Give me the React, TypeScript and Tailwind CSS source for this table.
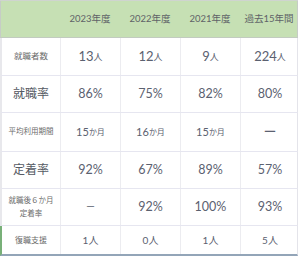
const jp = "font-['Lato','Noto_Sans_CJK_JP',sans-serif]";

const headers = ["2023年度", "2022年度", "2021年度", "過去15年間"];

type Cell = { num: string; unit?: string; cls?: string };

const rows: {
  label: React.ReactNode;
  labelClass: string;
  h: string;
  valueClass: string;
  unitClass?: string;
  cells: Cell[];
  leftAccent?: boolean;
}[] = [
  {
    label: "就職者数",
    labelClass: "text-[8.5px] text-[#6b6b6b]",
    h: "h-[38px]",
    valueClass: "text-[13px]",
    unitClass: "text-[9px]",
    cells: [
      { num: "13", unit: "人" },
      { num: "12", unit: "人" },
      { num: "9", unit: "人" },
      { num: "224", unit: "人" },
    ],
  },
  {
    label: "就職率",
    labelClass: "text-[12px] text-[#555a63]",
    h: "h-[37px]",
    valueClass: "text-[12.5px]",
    cells: [{ num: "86%" }, { num: "75%" }, { num: "82%" }, { num: "80%" }],
  },
  {
    label: "平均利用期間",
    labelClass: "text-[7.5px] text-[#6b6b6b]",
    h: "h-[39px]",
    valueClass: "text-[11px]",
    unitClass: "text-[8px]",
    cells: [
      { num: "15", unit: "か月" },
      { num: "16", unit: "か月" },
      { num: "15", unit: "か月" },
      { num: "ー", cls: "text-[13px]" },
    ],
  },
  {
    label: "定着率",
    labelClass: "text-[12px] text-[#555a63]",
    h: "h-[37px]",
    valueClass: "text-[12.5px]",
    cells: [{ num: "92%" }, { num: "67%" }, { num: "89%" }, { num: "57%" }],
  },
  {
    label: (
      <>
        就職後６か月
        <br />
        定着率
      </>
    ),
    labelClass: "text-[7.5px] leading-[13px] text-[#6b6b6b]",
    h: "h-[37px]",
    valueClass: "text-[12.5px]",
    cells: [{ num: "ー", cls: "text-[9px]" }, { num: "92%" }, { num: "100%" }, { num: "93%" }],
  },
  {
    label: "復職支援",
    labelClass: "text-[8px] text-[#6b6b6b]",
    h: "h-[30px]",
    valueClass: "text-[10px]",
    unitClass: "text-[10px]",
    leftAccent: true,
    cells: [
      { num: "1", unit: "人" },
      { num: "0", unit: "人" },
      { num: "1", unit: "人" },
      { num: "5", unit: "人" },
    ],
  },
];

const cols = "grid grid-cols-[59px_60px_60px_60px_58px]";

export default function App() {
  return (
    <div className={`w-[300px] h-[260px] bg-white ${jp}`}>
      <div className="w-[298px] border-t border-[#cfd4cf]">
        {/* header */}
        <div className={`${cols} h-[37px] bg-[#c6e0b4] border-b border-[#c2cbc0] border-x border-x-[#c6ccc6]`}>
          <div />
          {headers.map((h) => (
            <div key={h} className="flex items-center justify-center text-[9.5px] text-[#5f6368]">
              {h}
            </div>
          ))}
        </div>

        {/* body */}
        {rows.map((r, i) => (
          <div
            key={i}
            className={`${cols} ${r.h} border-r border-[#e4e4ea] border-l-2 ${
              r.leftAccent ? "border-l-[#78b078]" : "border-l-[#e8e8ec]"
            } ${i < rows.length - 1 ? "border-b border-b-[#e6e6f0]" : "border-b-2 border-b-[#93a5b8]"}`}
          >
            <div className={`flex items-center justify-center text-center border-r border-[#ececf0] ${r.labelClass}`}>
              <span>{r.label}</span>
            </div>
            {r.cells.map((c, j) => (
              <div
                key={j}
                className={`flex items-center justify-center text-[#5b6170] ${j < 3 ? "border-r border-[#ececf0]" : ""}`}
              >
                <span className={c.cls ?? r.valueClass}>{c.num}</span>
                {c.unit && <span className={r.unitClass}>{c.unit}</span>}
              </div>
            ))}
          </div>
        ))}
      </div>
    </div>
  );
}
